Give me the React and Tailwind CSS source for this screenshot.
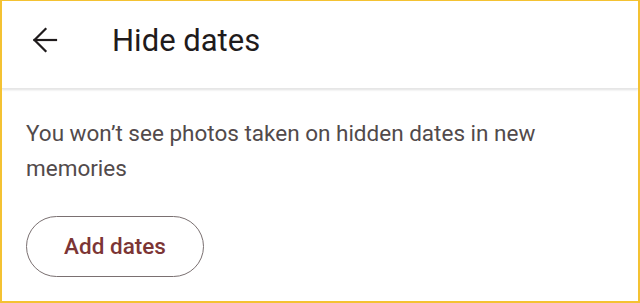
export default function App() {
  return (
    <div
      className="w-[640px] h-[303px] bg-white border-[#f4c232] border-t-[1px] border-l-[2px] border-r-[2px] border-b-[2px] flex flex-col overflow-hidden"
      style={{ fontFamily: 'Roboto, "Liberation Sans", sans-serif' }}
    >
      <header className="h-[88px] shrink-0 flex items-center pb-[9px] bg-white shadow-[0_1px_2px_rgba(0,0,0,0.12)] border-b border-[#e6e6e6]">
        <button className="ml-[31px] w-[24px] h-[24px] flex items-center justify-center text-[#1f1b1c]">
          <svg width="24" height="24" viewBox="0 0 24 24" fill="none" stroke="currentColor" strokeWidth="2.2" strokeLinecap="square" className="overflow-visible">
            <path d="M23 12H1.5" />
            <path d="M12.5 1L1.5 12L12.5 23" />
          </svg>
        </button>
        <h1 className="ml-[55px] text-[31px] leading-none text-[#1f1b1c] font-normal">Hide dates</h1>
      </header>
      <main className="flex-1 px-[24px] pt-[27px]">
        <p className="text-[22.5px] leading-[35px] text-[#524a4b] pr-[70px]">
          You won’t see photos taken on hidden dates in new memories
        </p>
        <button className="mt-[30px] w-[178px] h-[61px] rounded-full border-[1.5px] border-[#7a7071] text-[22.5px] font-medium text-[#7c3535] flex items-center justify-center">
          Add dates
        </button>
      </main>
    </div>
  );
}
